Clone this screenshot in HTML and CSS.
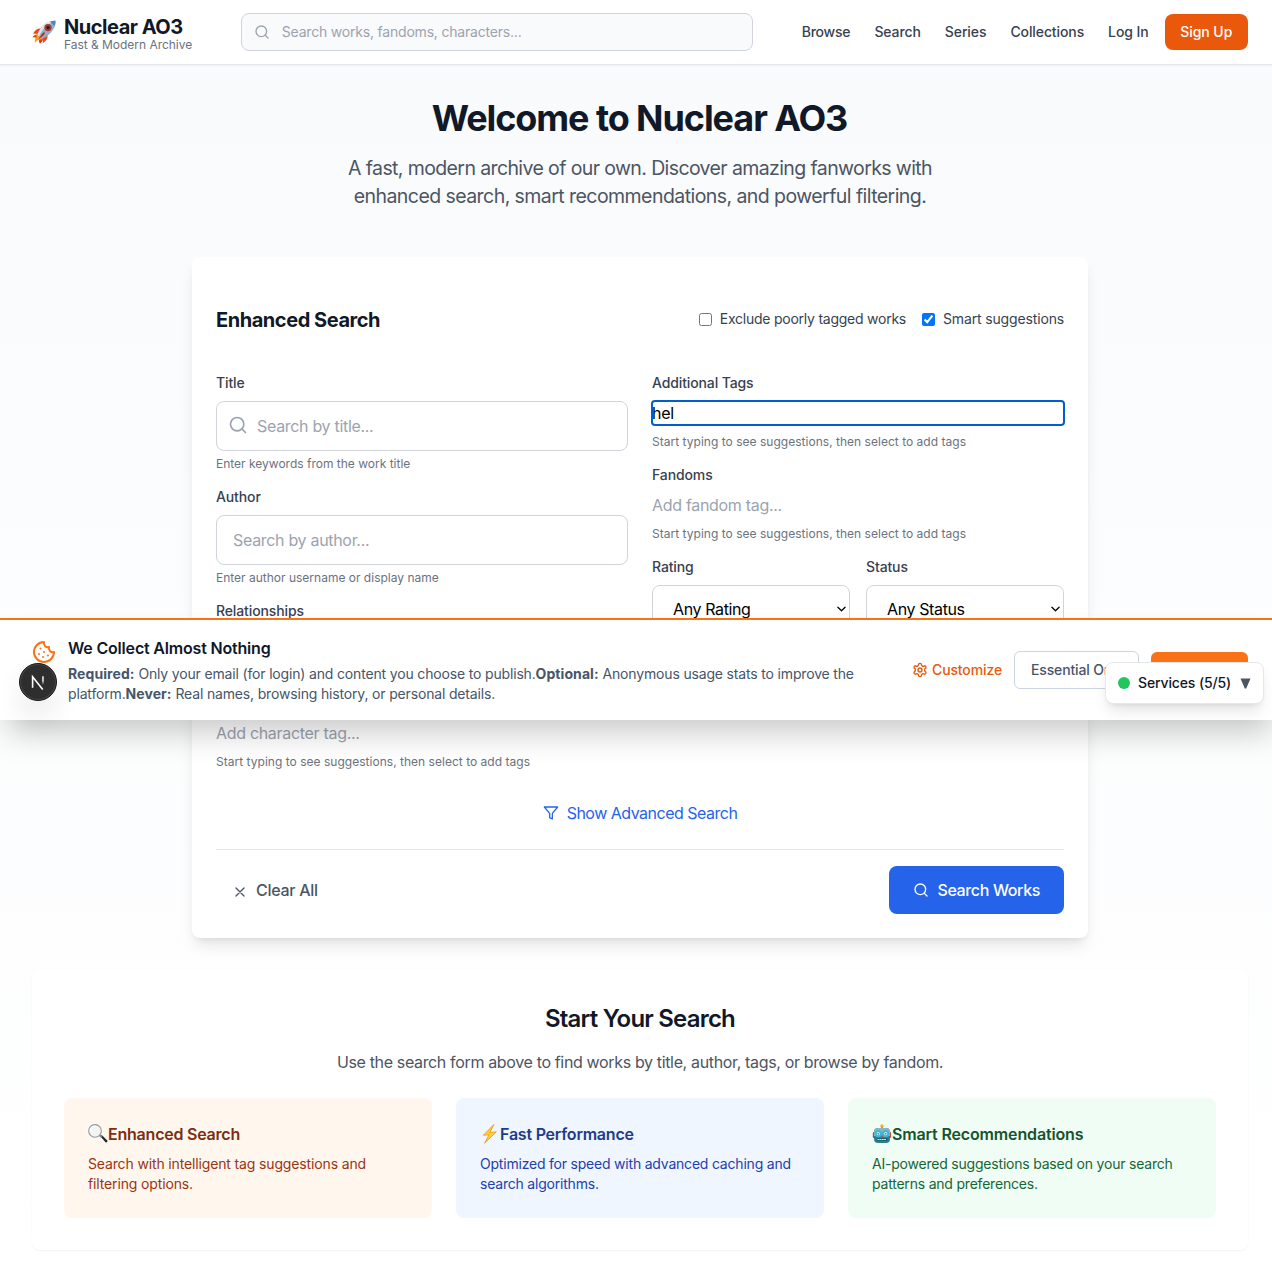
FILE: index.html
```html
<!DOCTYPE html>
<html lang="en">
<head>
<meta charset="utf-8">
<title>Nuclear AO3</title>
<link rel="stylesheet" href="styles.css">
</head>
<body>
<svg class="defs" aria-hidden="true">
  <symbol id="search" viewBox="0 0 24 24"><circle cx="11" cy="11" r="8"/><path d="m21 21-4.3-4.3"/></symbol>
  <symbol id="chevron" viewBox="0 0 10 6"><path d="M1 1l4 4 4-4"/></symbol>
</svg>
<div class="page">
  <header class="header">
    <a class="brand">
      <svg class="rocket" viewBox="0 0 24 24">
        <path d="M5 14c-2 .3-4 1.700-4.500 3.500 1.500-.6 2.500-.5 3.500-.2-1.300 1.700-1.500 3.700-1 5.700 1.300-2 2.300-2.700 4-3-.2 1.500.2 2.800 1 3.500 1.700-1 2.800-3 2.500-5.500z" fill="#f9a01b"/>
        <path d="M4.500 15c-1.500.2-3.300 1-4 2.500 1.500-.5 3-.3 4 .3zM7 20c0 1.500.3 2.700 1 3.500 1.500-1 2.400-2.500 2.500-4.500z" fill="#e23a1e"/>
        <path d="M9 8.500C6 8 3 10 1 13.500l6 .5zM15.500 15c.6 3-1.200 6-4.500 8l-1-6z" fill="#f0431f"/>
        <path d="M23.500.8C17 .5 12 3.500 8.500 8.500 7.300 10.200 6 12.800 5.500 15l3.800 3.800c2.200-.6 5-2 6.500-3.300C20.500 11.800 23.800 7 23.500.8z" fill="#8fb0cb"/>
        <path d="M23.500.8C17 .5 12 3.500 8.500 8.500 7.300 10.200 6 12.800 5.500 15l1.500 1.500C10 9.500 15.500 4 23.500.8z" fill="#dbe6ee"/>
        <path d="M23.500.8c.1 2-.2 3.800-.8 5.500L18 1.600c1.700-.6 3.500-.9 5.500-.8z" fill="#4c86bd"/>
        <circle cx="16" cy="7.600" r="2.700" fill="#1b1d27" stroke="#b5372d"/>
        <path d="M12.500 11.500c-2.500 2-4.800 5-6 8l6-5z" fill="#c22a20"/>
      </svg>
      <span class="brand-text"><strong>Nuclear AO3</strong><small>Fast &amp; Modern Archive</small></span>
    </a>
    <label class="site-search">
      <svg class="icon16"><use href="#search"/></svg>
      <input type="text" placeholder="Search works, fandoms, characters...">
    </label>
    <nav class="nav">
      <a class="browse">Browse</a><a>Search</a><a>Series</a><a>Collections</a>
      <span class="account"><a>Log In</a><a class="signup">Sign Up</a></span>
    </nav>
  </header>

  <main class="main">
    <section class="hero">
      <h1>Welcome to Nuclear AO3</h1>
      <p>A fast, modern archive of our own. Discover amazing fanworks with<br><span class="second">enhanced search, smart recommendations, and powerful filtering.</span></p>
    </section>

    <form class="search-card">
      <div class="card-head">
        <h2>Enhanced Search</h2>
        <div class="toggles">
          <label class="exclude"><input type="checkbox">Exclude poorly tagged works</label>
          <label><input type="checkbox" checked>Smart suggestions</label>
        </div>
      </div>
      <div class="columns">
        <div class="column">
          <div class="field">
            <label>Title</label>
            <div class="box with-icon"><svg class="icon20"><use href="#search"/></svg><input type="text" placeholder="Search by title..."></div>
            <p class="help">Enter keywords from the work title</p>
          </div>
          <div class="field">
            <label>Author</label>
            <div class="box"><input type="text" placeholder="Search by author..."></div>
            <p class="help">Enter author username or display name</p>
          </div>
          <div class="field tags">
            <label>Relationships</label>
            <input type="text">
            <p class="help"></p>
          </div>
          <div class="field tags">
            <label></label>
            <input type="text" placeholder="Add character tag...">
            <p class="help wide">Start typing to see suggestions, then select to add tags</p>
          </div>
        </div>
        <div class="column">
          <div class="field tags">
            <label>Additional Tags</label>
            <input class="focused" type="text" value="hel">
            <p class="help wide">Start typing to see suggestions, then select to add tags</p>
          </div>
          <div class="field tags">
            <label>Fandoms</label>
            <input type="text" placeholder="Add fandom tag...">
            <p class="help wide">Start typing to see suggestions, then select to add tags</p>
          </div>
          <div class="pair">
            <div class="field">
              <label>Rating</label>
              <div class="box select"><select><option>Any Rating</option></select><svg class="chevron"><use href="#chevron"/></svg></div>
            </div>
            <div class="field">
              <label>Status</label>
              <div class="box select"><select><option>Any Status</option></select><svg class="chevron"><use href="#chevron"/></svg></div>
            </div>
          </div>
        </div>
      </div>
      <div class="advanced">
        <svg class="icon16" viewBox="0 0 24 24"><path d="M22 3H2l8 9.460V19l4 2v-8.540z"/></svg>
        <span>Show Advanced Search</span>
      </div>
      <div class="actions">
        <button type="button" class="clear"><svg class="icon16" viewBox="0 0 24 24"><path d="M18 6 6 18M6 6l12 12"/></svg>Clear All</button>
        <button type="button" class="submit"><svg class="icon16"><use href="#search"/></svg>Search Works</button>
      </div>
    </form>

    <section class="start">
      <h2>Start Your Search</h2>
      <p class="lead">Use the search form above to find works by title, author, tags, or browse by fandom.</p>
      <div class="features">
        <article class="feature orange">
          <h3><svg class="emoji" viewBox="0 0 20 20">
            <path d="M12.300 12.300l1.400-1.200 5.600 5.300c.8.900-.7 2.700-1.800 1.900z" fill="#23272b"/>
            <path d="M11 12l1.500-1.400 1.800 1.600-1.300 1.500z" fill="#7b858d"/>
            <circle cx="7" cy="6.900" r="6.300" fill="#f4f4f3" stroke="#8e9ba6" stroke-width="1.100"/>
            <path d="M3 6.500C3.200 4.300 5 2.800 7 2.800" fill="none" stroke="#fff"/>
          </svg><span>Enhanced Search</span></h3>
          <p>Search with intelligent tag suggestions and<br>filtering options.</p>
        </article>
        <article class="feature blue">
          <h3><svg class="emoji" viewBox="0 0 20 20">
            <path d="M13.600.8L3.300 11.300l5.800-.6L4.600 19.200 16.300 7.800l-6 .7z" fill="#ffd034" stroke="#f39a1d" stroke-width=".9" stroke-linejoin="round"/>
          </svg><span>Fast Performance</span></h3>
          <p class="tight">Optimized for speed with advanced caching and<br>search algorithms.</p>
        </article>
        <article class="feature green">
          <h3><svg class="emoji" viewBox="0 0 20 20">
            <rect x=".8" y="8" width="3" height="6" rx="1" fill="#c8433b"/><rect x="16" y="8" width="3" height="6" rx="1" fill="#c8433b"/>
            <path d="M9 3h2v2H9z" fill="#c9564a"/><circle cx="10" cy="2" r="1.800" fill="#f1b43c"/>
            <rect x="2" y="4" width="16" height="15" rx="4" fill="#2f7f8c"/>
            <path d="M2 12V8a4 4 0 0 1 4-4h8a4 4 0 0 1 4 4v4z" fill="#8fb6bd"/>
            <circle cx="6.300" cy="9.700" r="2.600" fill="#e9fbff" stroke="#35b8db"/><circle cx="13.700" cy="9.700" r="2.600" fill="#e9fbff" stroke="#35b8db"/>
            <circle cx="6.300" cy="9.700" r="1" fill="#29a4cd"/><circle cx="13.700" cy="9.700" r="1" fill="#29a4cd"/>
            <path d="M10 10.500l1.200 2.200H8.800z" fill="#e1473d"/>
            <path d="M5.500 15.500h9" stroke="#16464f" stroke-width="2"/><path d="M5.800 15.500h8.500" stroke="#c9e2e4" stroke-width="1" stroke-dasharray="1.200 1"/>
          </svg><span class="smart">Smart Recommendations</span></h3>
          <p class="tight">AI-powered suggestions based on your search<br>patterns and preferences.</p>
        </article>
      </div>
    </section>
  </main>

  <aside class="consent">
    <svg class="cookie" viewBox="0 0 24 24"><path d="M12 2a10 10 0 1 0 10 10 4 4 0 0 1-5-5 4 4 0 0 1-5-5M8.500 8.500v.01M16 15.500v.01M12 12v.01M11 17v.01M7 14v.01"/></svg>
    <div class="consent-text">
      <h3>We Collect Almost Nothing</h3>
      <p><b>Required:</b> Only your email (for login) and content you choose to publish.<b>Optional:</b> Anonymous usage stats to improve the<br>platform.<b>Never:</b> Real names, browsing history, or personal details.</p>
    </div>
    <div class="consent-actions">
      <button type="button" class="customize"><svg class="icon16" viewBox="0 0 24 24"><path d="M12.220 2h-.44a2 2 0 0 0-2 2v.18a2 2 0 0 1-1 1.730l-.43.25a2 2 0 0 1-2 0l-.15-.08a2 2 0 0 0-2.730.73l-.22.38a2 2 0 0 0 .73 2.730l.15.1a2 2 0 0 1 1 1.720v.51a2 2 0 0 1-1 1.740l-.15.09a2 2 0 0 0-.73 2.730l.22.38a2 2 0 0 0 2.730.73l.15-.08a2 2 0 0 1 2 0l.43.25a2 2 0 0 1 1 1.730V20a2 2 0 0 0 2 2h.44a2 2 0 0 0 2-2v-.18a2 2 0 0 1 1-1.730l.43-.25a2 2 0 0 1 2 0l.15.08a2 2 0 0 0 2.730-.73l.22-.39a2 2 0 0 0-.73-2.730l-.15-.08a2 2 0 0 1-1-1.740v-.5a2 2 0 0 1 1-1.740l.15-.09a2 2 0 0 0 .73-2.730l-.22-.38a2 2 0 0 0-2.730-.73l-.15.08a2 2 0 0 1-2 0l-.43-.25a2 2 0 0 1-1-1.730V4a2 2 0 0 0-2-2z"/><circle cx="12" cy="12" r="3"/></svg>Customize</button>
      <button type="button" class="essential">Essential Only</button>
      <button type="button" class="accept"></button>
    </div>
  </aside>

  <div class="dev-badge">
    <svg viewBox="0 0 38 38"><defs><linearGradient id="fade" x1="0" y1="0" x2="0" y2="1"><stop offset=".5" stop-color="#fff"/><stop offset="1" stop-color="#fff" stop-opacity="0"/></linearGradient></defs><path d="M13.300 25V13.500L24 27" stroke="#fff"/><path d="M23.500 13h1.500v9h-1.500z" fill="url(#fade)" stroke="none"/></svg>
  </div>
  <div class="services"><i class="dot"></i><span>Services (5/5)</span><svg class="caret" viewBox="0 0 10 11"><path d="M0 .5h10L5.700 10.500H4.300z"/></svg></div>
</div>
</body>
</html>
```
FILE: styles.css
```css
*{box-sizing:border-box}
html{overflow:hidden}
body{margin:0;overflow:hidden;font-family:Inter,"Liberation Sans",sans-serif;color:#111827;font-size:16px;line-height:24px}
h1,h2,h3,p{margin:0}
input,select,button{font:inherit;letter-spacing:inherit;border:0;padding:0;margin:0;background:none;outline:0}
input::placeholder{color:#9ca3af;opacity:1}
svg{display:block;flex:none;fill:none;stroke:currentColor;stroke-width:2;stroke-linecap:round;stroke-linejoin:round}
.defs{position:absolute;width:0;height:0}
.icon16{width:16px;height:16px}
.icon20{width:20px;height:20px}
.page{position:relative;width:1280px;height:1282px;overflow:hidden;background:linear-gradient(#f8fafc,#fff)}

.header{position:relative;display:flex;align-items:center;justify-content:space-between;height:65px;padding:0 32px;background:#fff;border-bottom:1px solid #e5e7eb;box-shadow:0 1px 2px rgba(0,0,0,.05)}
.brand{display:flex;align-items:center;gap:8px;width:160px}
.rocket{width:24px;height:24px;stroke:none}
.brand-text{display:flex;flex-direction:column;padding-top:5px}
.brand strong{font-size:20px;line-height:20px;letter-spacing:-.47px;font-weight:700}
.brand small{font-size:12px;line-height:16px;color:#6b7280;white-space:nowrap;letter-spacing:-.03px}
.site-search{display:flex;align-items:center;gap:12px;width:512px;height:38px;padding:0 12px;border:1px solid #d1d5db;border-radius:8px;background:#f9fafb;color:#9ca3af;font-size:14px;letter-spacing:-.2px}
.site-search input{flex:1}
.nav{display:flex;align-items:center;gap:24px;font-size:14px;font-weight:500;letter-spacing:-.1px;color:#374151}
.browse{letter-spacing:-.2px}
.account{display:flex;align-items:center;gap:16px}
.signup{width:83.500px;height:36px;line-height:36px;text-align:center;border-radius:8px;background:#ea580c;color:#fff;letter-spacing:-.05px}

.main{display:flex;flex-direction:column;align-items:center;padding:32px}
.hero{text-align:center;margin-bottom:47px}
.hero h1{font-size:36px;line-height:42px;letter-spacing:-1.080px;font-weight:700;margin-bottom:15px;margin-right:1px}
.hero p{font-size:19.500px;line-height:28px;letter-spacing:-.61px;color:#4b5563}
.hero .second{letter-spacing:-.56px}

.search-card{width:896px;height:681px;padding:24px;border-radius:8px;background:#fff;box-shadow:0 10px 15px -3px rgba(0,0,0,.1),0 4px 6px -4px rgba(0,0,0,.1)}
.card-head{display:flex;justify-content:space-between;align-items:center;height:28px;margin:24px 0 40px}
.card-head h2{font-size:20px;font-weight:700;letter-spacing:-.45px;padding-top:2px}
.toggles{display:flex;gap:16px;font-size:14px;line-height:20px;color:#374151;letter-spacing:-.15px}
.toggles label{display:flex;align-items:center;gap:8px}
.toggles .exclude{letter-spacing:-.24px}
.toggles input{width:13px;height:13px}
.columns{display:grid;grid-template-columns:1fr 1fr;gap:24px}
.column{display:flex;flex-direction:column;gap:16px}
.field{display:flex;flex-direction:column}
.field>label{height:20px;font-size:14px;line-height:20px;font-weight:500;color:#374151;letter-spacing:-.12px;margin-bottom:8px}
.field input{letter-spacing:-.31px;color:#000;height:24px;width:100%}
.box{display:flex;align-items:center;height:50px;padding:0 16px;border:1px solid #d1d5db;border-radius:8px}
.with-icon{gap:9px;padding-left:11px;color:#9ca3af}
.with-icon .icon20{margin-bottom:2px}
.help{height:16px;font-size:12px;line-height:18px;color:#6b7280;margin-top:4px}
.wide{letter-spacing:.023px}
.tags .help{margin-top:8px}
.tags .focused{outline:2px solid #005fcc;outline-offset:-1px;border-radius:3px}
.pair{display:grid;grid-template-columns:1fr 1fr;gap:16px}
.select{padding:0 3px 2px 20px;color:#000;letter-spacing:-.38px}
.select select{flex:1;appearance:none;color:#000}
.chevron{width:9px;height:6px;stroke-width:1.400}
.advanced{display:flex;align-items:center;justify-content:center;gap:8px;height:24px;margin-top:32px;color:#2563eb;letter-spacing:-.5px}
.advanced .icon16{stroke-width:1.900}
.actions{display:flex;justify-content:space-between;align-items:center;margin-top:24px;padding-top:16px;border-top:1px solid #e5e7eb}
.actions button{display:flex;align-items:center;gap:8px;height:48px;font-weight:500;letter-spacing:-.36px}
.clear{padding:0 16px;color:#4b5563}
.actions .clear{letter-spacing:-.28px}
.clear .icon16{margin-top:3px}
.actions .submit{padding:0 24px;border-radius:8px;background:#2563eb;color:#fff}

.start{width:1216px;height:280px;margin-top:32px;padding:33px 32px 32px;border-radius:8px;background:#fff;text-align:center;box-shadow:0 1px 2px rgba(0,0,0,.05)}
.start h2{font-size:24px;line-height:32px;font-weight:600;letter-spacing:-.8px;margin-bottom:15px}
.start .lead{color:#4b5563;letter-spacing:-.35px;margin-bottom:24px}
.features{display:grid;grid-template-columns:repeat(3,1fr);gap:24px;text-align:left}
.feature{height:120px;padding:24px;border-radius:8px}
.feature h3{display:flex;align-items:center;font-size:16px;line-height:24px;font-weight:600;letter-spacing:-.225px;margin-bottom:8px}
.feature h3 .smart{letter-spacing:-.15px}
.feature p{font-size:14px;line-height:20px;letter-spacing:-.143px;white-space:nowrap}
.feature .tight{letter-spacing:-.208px}
.emoji{width:20px;height:20px;stroke:none}
.orange{background:#fff7ed;color:#7c2d12}
.orange p{color:#9a3412}
.blue{background:#eff6ff;color:#1e3a8a}
.blue p{color:#1e40af}
.green{background:#f0fdf4;color:#14532d}
.green p{color:#166534}

/* Overlays pinned to the bottom edge of the first screen */
.consent{position:absolute;top:618px;left:0;width:1280px;height:102px;display:flex;padding:16px 32px;gap:12px;border-top:2px solid #f97316;background:#fff;box-shadow:0 20px 32px -8px rgba(0,0,0,.22)}
.cookie{width:24px;height:24px;margin-top:4px;color:#f97316}
.consent-text{flex:1;white-space:nowrap}
.consent h3{font-size:16px;line-height:24px;font-weight:600;letter-spacing:-.187px;color:#0f172a;margin-bottom:4px}
.consent p{font-size:14px;line-height:20px;letter-spacing:-.165px;color:#475569}
.consent b{font-weight:700;letter-spacing:.08px}
.consent-actions{display:flex;align-items:center;gap:12px;font-size:14px;font-weight:500}
.consent-actions button{height:38px}
.customize{display:flex;align-items:center;gap:4px;color:#ea580c;letter-spacing:-.12px}
.consent-actions .essential{width:124.500px;padding-left:16px;text-align:left;border:1px solid #cbd5e1;border-radius:6px;color:#475569;letter-spacing:-.15px}
.consent-actions .accept{width:97.500px;height:36px;border-radius:6px;background:#f97316}
.dev-badge{position:absolute;top:663px;left:19px;width:38px;height:38px;border-radius:50%;background:#2e2e2e;border:1px solid #171717;box-shadow:inset 0 0 0 1px #484848,0 16px 32px -8px rgba(0,0,0,.24)}
.dev-badge svg{width:36px;height:36px;stroke-width:1.700;stroke-linecap:butt;stroke-linejoin:miter}
.services{position:absolute;top:662px;left:1105px;width:159px;height:42px;display:flex;align-items:center;gap:8px;padding:0 12px;border:1px solid #e5e7eb;border-radius:8px;background:#fff;font-size:14px;font-weight:500;letter-spacing:-.13px;white-space:nowrap;box-shadow:0 10px 15px -3px rgba(0,0,0,.1),0 4px 6px -4px rgba(0,0,0,.1)}
.dot{flex:none;width:12px;height:12px;border-radius:50%;background:#22c55e}
.caret{width:11px;height:11px;margin-left:1px;fill:#4b5563;stroke:none}
```
